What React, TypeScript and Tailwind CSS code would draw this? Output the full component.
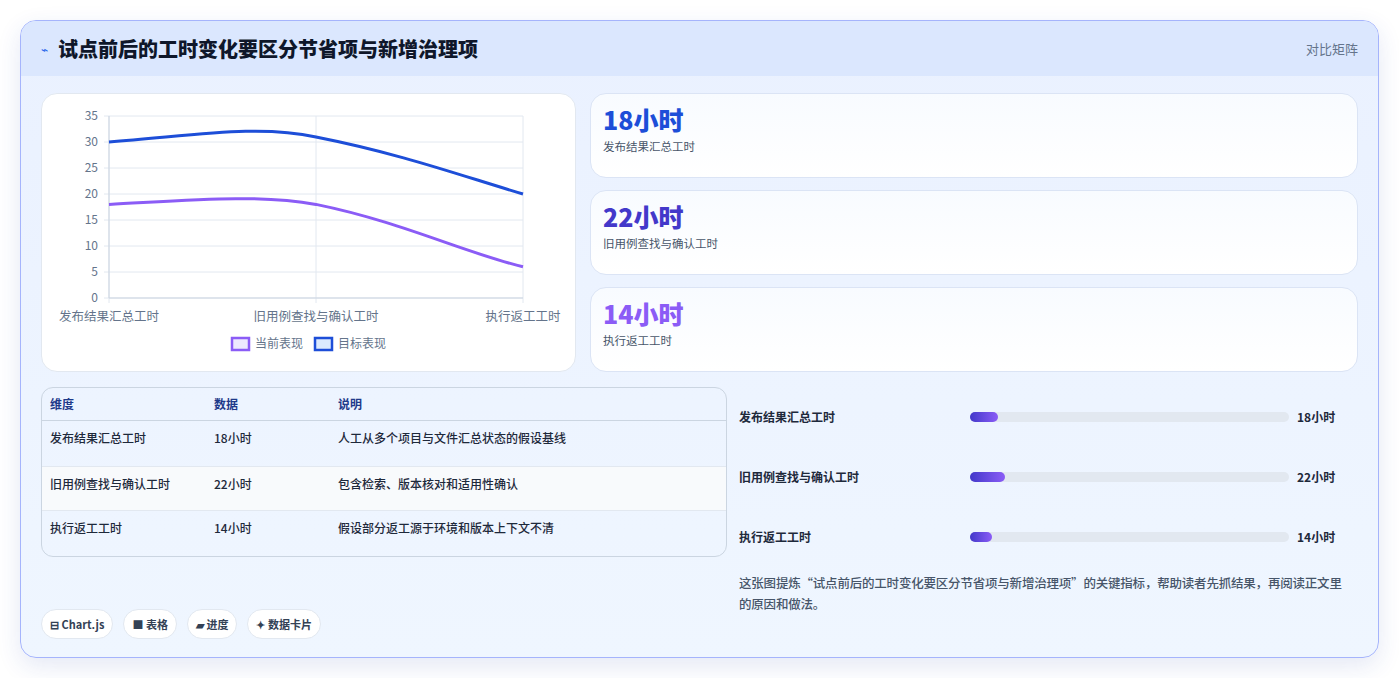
const METRICS = [
  { value: "18小时", label: "发布结果汇总工时", color: "text-[#1d4ed8]" },
  { value: "22小时", label: "旧用例查找与确认工时", color: "text-[#4338ca]" },
  { value: "14小时", label: "执行返工工时", color: "text-[#8b5cf6]" },
];

const ROWS = [
  { dim: "发布结果汇总工时", data: "18小时", note: "人工从多个项目与文件汇总状态的假设基线", w: 28 },
  { dim: "旧用例查找与确认工时", data: "22小时", note: "包含检索、版本核对和适用性确认", w: 35 },
  { dim: "执行返工工时", data: "14小时", note: "假设部分返工源于环境和版本上下文不清", w: 22 },
];

const FONT = { fontFamily: '"Noto Sans CJK SC", "Noto Sans", sans-serif' };

function Chart() {
  const ys = [35, 30, 25, 20, 15, 10, 5, 0];
  const y = (v: number) => 204 - v * 5.2;
  return (
    <svg width="535" height="279" viewBox="0 0 535 279" className="block">
      {ys.map((v) => (
        <g key={v}>
          <line x1="62" x2="481" y1={y(v)} y2={y(v)} stroke="#e2e8f0" strokeWidth="1" />
          <text x="56" y={y(v) + 4} textAnchor="end" fontSize="12" fill="#64748b">{v}</text>
        </g>
      ))}
      {[67, 274, 481].map((x) => (
        <line key={x} x1={x} x2={x} y1={y(35)} y2={209} stroke="#e2e8f0" strokeWidth="1" />
      ))}
      <line x1="67" x2="481" y1={204} y2={204} stroke="#cbd5e1" />
      <line x1="67" x2="67" y1={y(35)} y2={204} stroke="#cbd5e1" />
      <path d="M67,48 C150,42 215,30 274,43 C360,60 420,82 481,100" fill="none" stroke="#1d4ed8" strokeWidth="3" />
      <path d="M67,110.4 C150,106 215,100 274,110.4 C360,128 420,158 481,172.8" fill="none" stroke="#8b5cf6" strokeWidth="3" />
      <text x="67" y="227" textAnchor="middle" fontSize="12.5" fill="#64748b">发布结果汇总工时</text>
      <text x="274" y="227" textAnchor="middle" fontSize="12.5" fill="#64748b">旧用例查找与确认工时</text>
      <text x="481" y="227" textAnchor="middle" fontSize="12.5" fill="#64748b">执行返工工时</text>
      <rect x="190" y="244" width="17" height="12" fill="#ede9fe" stroke="#8b5cf6" strokeWidth="2.5" />
      <text x="213" y="254" fontSize="12" fill="#64748b">当前表现</text>
      <rect x="273" y="244" width="17" height="12" fill="#dbeafe" stroke="#1d4ed8" strokeWidth="2.5" />
      <text x="296" y="254" fontSize="12" fill="#64748b">目标表现</text>
    </svg>
  );
}

export default function App() {
  return (
    <div className="min-h-screen bg-white p-5" style={FONT}>
      <div className="h-[638px] overflow-hidden rounded-2xl border border-[#a5b4fc] bg-gradient-to-b from-[#eaf1ff] to-[#eff6ff] shadow-[0_8px_24px_rgba(30,64,175,0.12)]">
        {/* header */}
        <div className="flex h-[55px] items-center justify-between bg-[#dbe7fe] px-5">
          <div className="flex items-center gap-2.5">
            <span className="text-[12px] text-[#2563eb]">⌁</span>
            <h1 className="text-[20px] font-black text-[#0f172a]">试点前后的工时变化要区分节省项与新增治理项</h1>
          </div>
          <span className="text-[13px] text-[#64748b]">对比矩阵</span>
        </div>

        <div className="px-5 pt-[17px]">
          {/* top */}
          <div className="grid grid-cols-[535px_1fr] gap-[14px]">
            <div className="h-[279px] rounded-2xl border border-[#e2e8f0] bg-white">
              <Chart />
            </div>
            <div className="flex flex-col gap-3">
              {METRICS.map((m) => (
                <div key={m.value} className="h-[85px] rounded-2xl border border-[#dbe4f5] bg-gradient-to-b from-[#f8fbff] to-white px-3 pt-2">
                  <div className={`text-[25px] font-extrabold leading-[34px] ${m.color}`}>{m.value}</div>
                  <div className="mt-0.5 text-[11.5px] text-[#475569]">{m.label}</div>
                </div>
              ))}
            </div>
          </div>

          {/* bottom */}
          <div className="mt-[15px] grid grid-cols-[686px_1fr] gap-[12px]">
            <div className="flex h-[252px] flex-col">
              <div className="overflow-hidden rounded-xl border border-[#cbd5e1]">
                <div className="flex h-[33px] items-center border-b border-[#cbd5e1] px-2 text-[12px] font-semibold text-[#1e3a8a]">
                  <span className="w-[164px]">维度</span>
                  <span className="w-[124px]">数据</span>
                  <span>说明</span>
                </div>
                {ROWS.map((r, i) => (
                  <div key={r.dim} className={`flex h-[45px] items-start px-2 pt-[8px] text-[12px] font-medium text-[#1e293b] ${i === 1 ? "border-y border-[#e2e8f0] bg-[#f8fafc]" : ""}`}>
                    <span className="w-[164px]">{r.dim}</span>
                    <span className="w-[124px]">{r.data}</span>
                    <span>{r.note}</span>
                  </div>
                ))}
              </div>
              <div className="mt-auto flex gap-2.5">
                {["⊟ Chart.js", "■ 表格", "▰ 进度", "✦ 数据卡片"].map((c) => (
                  <span key={c} className="rounded-full border border-[#e2e8f0] bg-white px-2 py-1.5 text-[11px] font-semibold text-[#334155]">{c}</span>
                ))}
              </div>
            </div>
            <div className="pr-2">
              {ROWS.map((r) => (
                <div key={r.dim} className="flex h-[60px] items-center">
                  <span className="w-[231px] text-[12px] font-semibold text-[#1e293b]">{r.dim}</span>
                  <div className="h-[10px] w-[319px] rounded-full bg-[#e2e8f0]">
                    <div className="h-full rounded-full bg-gradient-to-r from-[#4338ca] to-[#8b5cf6]" style={{ width: r.w }} />
                  </div>
                  <span className="ml-2 text-[12px] font-bold text-[#1e293b]">{r.data}</span>
                </div>
              ))}
              <p className="mt-[5px] text-[12.5px] font-medium leading-[21px] tracking-[-0.2px] text-[#475569]">
                这张图提炼“试点前后的工时变化要区分节省项与新增治理项”的关键指标，帮助读者先抓结果，再阅读正文里的原因和做法。
              </p>
            </div>
          </div>
        </div>
      </div>
    </div>
  );
}
